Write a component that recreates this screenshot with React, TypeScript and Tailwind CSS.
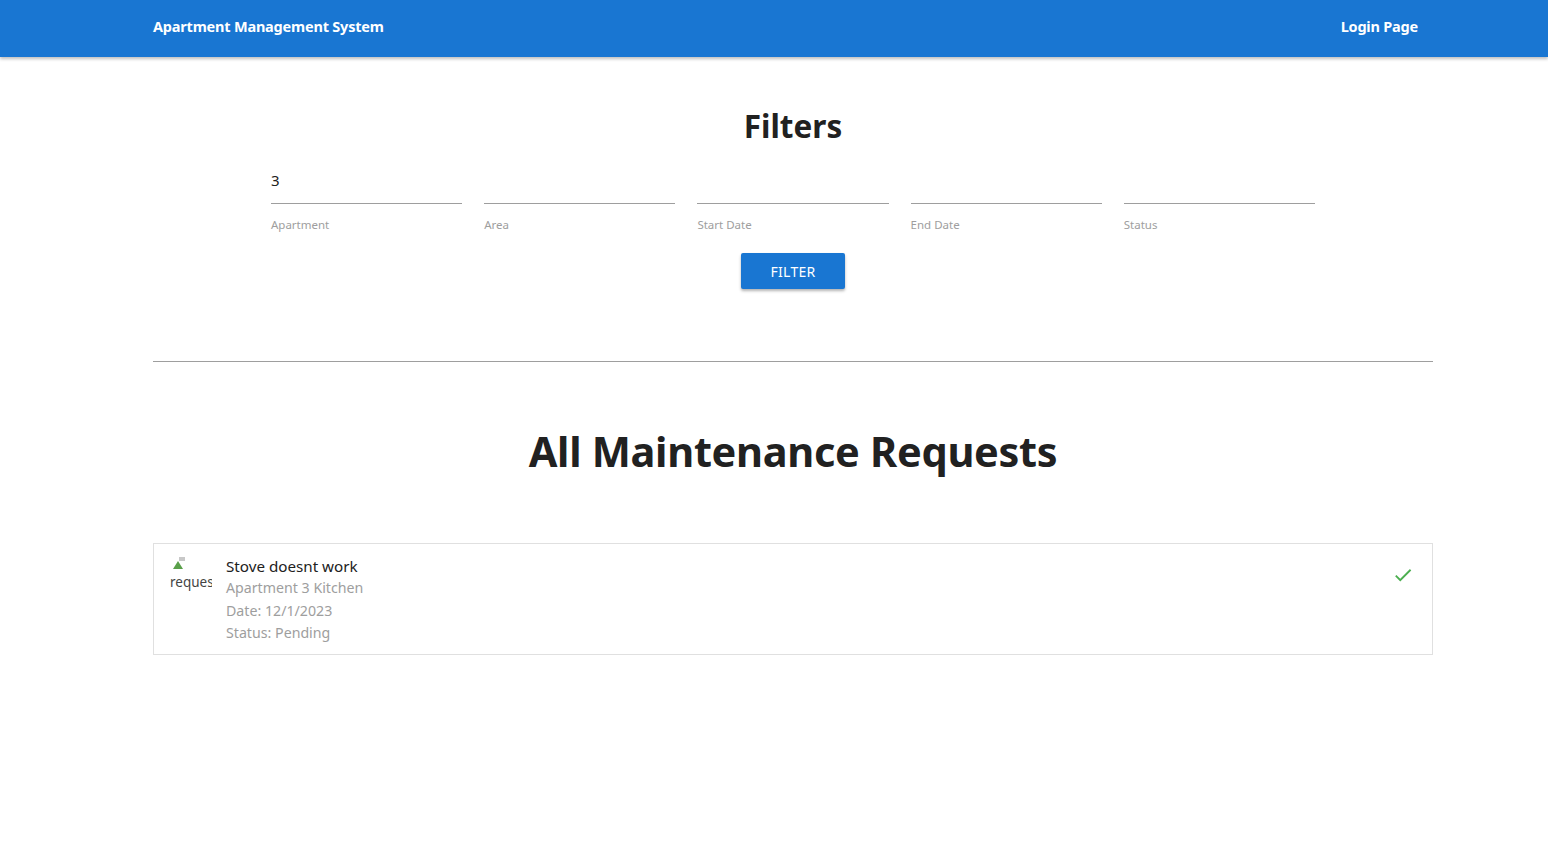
import React from "react";

const font = { fontFamily: '"Noto Sans", "Open Sans", sans-serif' };

function Field({ label, value }: { label: string; value?: string }) {
  return (
    <div className="px-[11px]">
      <div className="h-[49px] border-b border-[#9e9e9e] flex items-end pb-[15px] text-[15px] text-[#212121] leading-none">
        {value ?? ""}
      </div>
      <div className="mt-[15px] text-[11.5px] text-[#9e9e9e] leading-none">{label}</div>
    </div>
  );
}

export default function App() {
  return (
    <div className="min-h-screen bg-white" style={font}>
      <nav className="h-[57px] bg-[#1976d2] shadow-[0_2px_3px_rgba(0,0,0,0.25)] flex items-center justify-between pl-[153px] pr-[130px] pb-[4px]">
        <span className="text-white font-bold text-[14.5px] tracking-[-0.2px]">Apartment Management System</span>
        <span className="text-white font-bold text-[14.5px] tracking-[-0.2px]">Login Page</span>
      </nav>
      <div className="ml-[153px] w-[1280px]">
        <h4 className="text-center font-bold text-[31.5px] text-[#212121] mt-[53px] leading-none">Filters</h4>
        <div className="w-[1066px] mx-auto grid grid-cols-5 mt-[13px]">
          <Field label="Apartment" value="3" />
          <Field label="Area" />
          <Field label="Start Date" />
          <Field label="End Date" />
          <Field label="Status" />
        </div>
        <div className="flex justify-center mt-[23px]">
          <button className="w-[104px] h-[36px] bg-[#1976d2] text-white text-[14px] rounded-[2px] shadow-[0_2px_3px_rgba(0,0,0,0.3)] tracking-[0.3px]">
            FILTER
          </button>
        </div>
        <div className="mt-[72px] border-t border-[#9e9e9e]" />
        <h3 className="text-center font-bold text-[41.5px] text-[#212121] mt-[69px] leading-none tracking-[-0.3px]">
          All Maintenance Requests
        </h3>
        <div className="mt-[70px] border border-[#e0e0e0] h-[112px] flex pl-4 pt-[11px]">
          <div className="w-[42px] h-[42px] overflow-hidden shrink-0 pt-[1px]">
            <div className="flex flex-col text-[13.5px] text-[#444] leading-[16px]">
              <svg width="16" height="16" viewBox="0 0 16 16">
                <path d="M3 13 L8 5 L13 13 Z" fill="#5aa04a" />
                <rect x="9" y="1" width="6" height="4" fill="#c8c8c8" />
              </svg>
              <span className="whitespace-nowrap mt-[2px]">request</span>
            </div>
          </div>
          <div className="ml-[14px] flex-1 leading-[22.5px] text-[14.2px]">
            <div className="text-[#212121] text-[15.2px]">Stove doesnt work</div>
            <div className="text-[#9e9e9e]">Apartment 3 Kitchen</div>
            <div className="text-[#9e9e9e]">Date: 12/1/2023</div>
            <div className="text-[#9e9e9e]">Status: Pending</div>
          </div>
          <div className="pt-[9px] pr-[18px]">
            <svg width="22" height="22" viewBox="0 0 24 24" fill="#4caf50">
              <path d="M9 16.17L4.83 12l-1.42 1.41L9 19 21 7l-1.41-1.41z" />
            </svg>
          </div>
        </div>
      </div>
    </div>
  );
}
